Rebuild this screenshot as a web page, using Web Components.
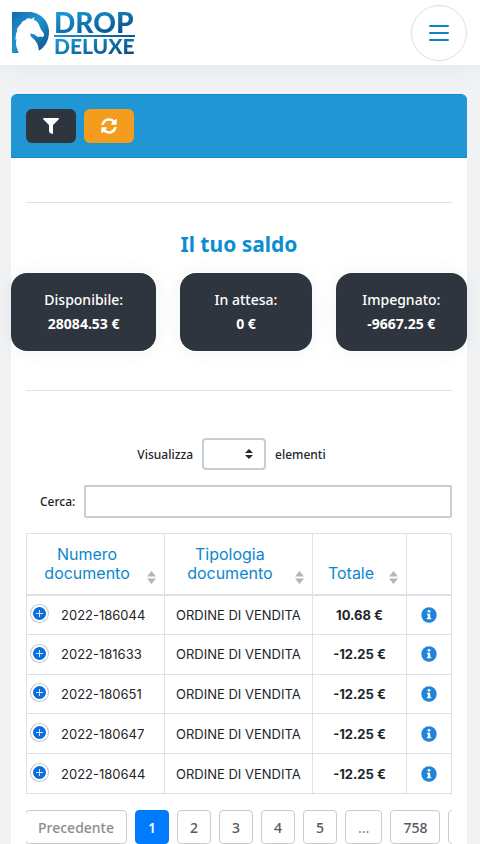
<!DOCTYPE html>
<html lang="it">
<head>
<meta charset="utf-8">
<meta name="viewport" content="width=device-width, initial-scale=1">
<title>Drop Deluxe – Il tuo saldo</title>
<style>
  html { background: #f0f2f4; }
  body { margin: 0; min-height: 100vh; overflow-x: hidden; font-family: "Noto Sans", "Open Sans", sans-serif; font-size: 14px; color: #212529; }
</style>
</head>
<body>
<dd-header></dd-header>
<dd-panel>
  <dd-toolbar slot="toolbar"></dd-toolbar>
  <dd-balances>
    <dd-balance label="Disponibile:">28084.53 €</dd-balance>
    <dd-balance label="In attesa:">0 €</dd-balance>
    <dd-balance label="Impegnato:">-9667.25 €</dd-balance>
  </dd-balances>
  <dd-filters></dd-filters>
  <dd-documents></dd-documents>
  <dd-pager></dd-pager>
</dd-panel>

<script>
const define = (name, markup, setup) => customElements.define(name, class extends HTMLElement {
  constructor() {
    super();
    this.attachShadow({ mode: "open" }).innerHTML =
      "<style>*{box-sizing:border-box}button,input,select{font:inherit;color:inherit;margin:0}button{cursor:pointer}</style>" + markup;
  }
  connectedCallback() { if (setup) setup(this, this.shadowRoot); }
});

define("dd-logo", `
  <style>
    :host { display: block; }
    a { display: flex; align-items: center; gap: 4px; text-decoration: none; }
    svg { display: block; }
    .words { display: flex; flex-direction: column; font-family: Lato, sans-serif; }
    b, i { font-style: normal; font-weight: 900; color: transparent; -webkit-background-clip: text; background-clip: text; background-image: linear-gradient(165deg, #1ba0dc, #07467f); }
    b { font-size: 28px; line-height: 23px; }
    i { font-size: 21px; line-height: 18px; }
    hr { width: 100%; height: 2px; margin: 1px 0 0; border: 0; background: linear-gradient(90deg, #1c93cf, #0a5593); }
  </style>
  <a href="#" aria-label="Drop Deluxe">
    <svg width="39" height="42" viewBox="0 0 39 42">
      <defs><linearGradient id="g" x1="0" y1="0" x2="1" y2="1"><stop offset="0" stop-color="#116aad"/><stop offset=".45" stop-color="#2196d4"/><stop offset="1" stop-color="#084b86"/></linearGradient></defs>
      <path fill="url(#g)" d="M1 0H18C29 0 38 9 38 20C38 29 33 37 25 40L8 41H1Z"/>
      <path fill="#fff" d="M23.500 5 23 8C26 9 27.500 11 28.500 14L30 17.500 32.500 21C33.500 23 33 25 31 25L29 24.500 28 25C26 25 25 23.500 23.500 22.500C22 22 21 22 19.500 21.500C19 23.500 20 25 22 26.500C26 30 28 34 28 42H8C7.500 39 4.500 35 5 30L5.500 27 4.500 28C4.500 24 5 21 6.500 18L5.500 18C7 15 8.500 13 10.500 11.500L10.500 10.500C12 9 13.500 8 15 8L15 7C17 6 19 6 20.500 7Z"/>
    </svg>
    <span class="words"><b>DROP</b><hr><i>DELUXE</i></span>
  </a>`);

define("dd-header", `
  <style>
    :host { display: flex; align-items: center; justify-content: space-between; height: 65px; padding: 0 13px 0 11px; background: #fff; box-shadow: 0 0 30px rgba(40,50,70,.06); box-sizing: border-box; }
    button { display: grid; place-items: center; width: 56px; height: 56px; padding: 0; border: 1px solid #dcdee0; border-radius: 50%; background: #fff; }
  </style>
  <dd-logo></dd-logo>
  <button type="button" aria-label="Menu"><svg width="20" height="16" viewBox="0 0 20 16" stroke="#0b84cb" stroke-width="2" stroke-linecap="round"><path d="M1 1H19M1 8H19M1 15H19"/></svg></button>`);

define("dd-panel", `
  <style>
    :host { display: block; margin: 29px 13px 0 11px; background: #fff; border-radius: 6px 6px 0 0; }
    main { padding: 0 15px; }
  </style>
  <slot name="toolbar"></slot>
  <main><slot></slot></main>`);

define("dd-toolbar", `
  <style>
    :host { display: flex; gap: 8px; padding: 14px 15px; background: #2196d5; border: 1px solid #128acb; border-width: 1px 0; border-radius: 6px 6px 0 0; }
    button { display: grid; place-items: center; width: 50px; height: 34px; padding: 0; border: 0; border-radius: 6px; color: #fff; background: #2f353e; }
    button.warn { background: #f39c1d; }
    svg { fill: currentColor; }
  </style>
  <button type="button" aria-label="Filtra"><svg width="16" height="16" viewBox="0 0 512 512"><path d="M488 0H24C2.700 0-8 25.900 7 41L192 226V432C192 440 196 447 202 452L282 508C298 519 320 508 320 488V226L505 41C520 26 509.300 0 488 0Z"/></svg></button>
  <button type="button" class="warn" aria-label="Aggiorna"><svg width="16" height="16" viewBox="0 0 512 512"><path d="M370.700 133.300C339.500 104 298.900 88 255.800 88c-77.500 0-144.300 53.200-162.800 126.900-1.300 5.400-6.100 9.100-11.700 9.100H24.100c-7.500 0-13.200-6.800-11.800-14.200C33.900 94.900 134.800 8 256 8c66.400 0 126.800 26.100 171.300 68.700L463 41C478.100 25.900 504 36.600 504 57.900V192c0 13.300-10.700 24-24 24H345.900c-21.400 0-32.100-25.900-17-41zM32 296h134.100c21.400 0 32.100 25.900 17 41l-41.800 41.800c31.300 29.300 71.800 45.300 114.900 45.200 77.500-.1 144.300-53.200 162.800-126.900 1.300-5.400 6.100-9.100 11.700-9.100h57.300c7.500 0 13.200 6.800 11.800 14.200C478.100 417.100 377.200 504 256 504c-66.400 0-126.800-26.100-171.300-68.700L49 471c-15.100 15.100-41 4.400-41-16.900V320c0-13.300 10.700-24 24-24z"/></svg></button>`);

define("dd-balances", `
  <style>
    :host { display: block; padding-top: 44px; }
    hr { height: 1px; margin: 0; border: 0; background: #dfe1e3; }
    section { padding: 26px 0 39px; }
    h2 { margin: 0; font-size: 21px; line-height: 30px; font-weight: 700; text-align: center; color: #0c8dd2; }
    .cards { display: flex; justify-content: space-between; gap: 24px; margin: 14px -15px 0; }
  </style>
  <hr><section><h2>Il tuo saldo</h2><div class="cards"><slot></slot></div></section><hr>`);

define("dd-balance", `
  <style>
    :host { flex: 1 1 131px; display: block; padding: 15px 12px; border-radius: 16px; background: #2f353e; color: #fff; text-align: center; font-weight: 500; line-height: 24px; box-shadow: 0 0 20px rgba(40,50,70,.06); box-sizing: border-box; white-space: nowrap; }
    :host(:first-child) { flex-basis: 145px; }
    span, b { display: block; }
    b { font-weight: 700; }
  </style>
  <span></span><b><slot></slot></b>`, (el, root) => { root.querySelector("span").textContent = el.getAttribute("label"); });

define("dd-filters", `
  <style>
    :host { display: flex; flex-direction: column; gap: 15px; padding: 47px 0 15px; font-size: 12px; font-weight: 500; }
    .len { display: flex; align-items: center; justify-content: center; gap: 9px; margin-right: 15px; }
    .pick { display: grid; align-items: center; }
    select, input { appearance: none; border: 2px solid #c6cdd5; background: #fff; outline: 0; }
    select { grid-area: 1/1; width: 64px; height: 32px; border-radius: 4px; padding: 0 8px; }
    .pick svg { grid-area: 1/1; justify-self: end; margin-right: 13px; pointer-events: none; }
    .find { display: flex; align-items: center; gap: 9px; padding-left: 14px; }
    input { flex: 1; min-width: 0; height: 33px; padding: 0 8px; border-radius: 2px; }
  </style>
  <div class="len"><label for="n">Visualizza</label>
    <span class="pick"><select id="n"><option></option></select><svg width="8" height="10" viewBox="0 0 8 10" fill="#20262d"><path d="M4 0 8 4H0ZM4 10 8 6H0Z"/></svg></span>
    <span>elementi</span></div>
  <div class="find"><label for="q">Cerca:</label><input id="q" type="search"></div>`);

define("dd-documents", `
  <style>
    :host { display: block; font-family: Inter, sans-serif; }
    table { width: 100%; height: 261px; border-collapse: collapse; table-layout: fixed; }
    th, td { border: 1px solid #dee2e6; padding: 0; text-align: center; }
    col:nth-child(1) { width: 32.500%; } col:nth-child(2) { width: 34.700%; } col:nth-child(3) { width: 22.300%; }
    th { height: 61px; padding: 0 8px 11px; vertical-align: bottom; border-bottom-width: 2px; font-size: 16px; line-height: 19px; font-weight: 400; color: #0b87cc; }
    .head { display: flex; align-items: flex-end; justify-content: flex-end; gap: 8px; }
    .head span { flex: 1; }
    .head svg { margin-bottom: -1px; }
    td { height: 39px; font-size: 13px; color: #212529; white-space: nowrap; }
    .num { display: flex; align-items: center; gap: 13px; padding-left: 4px; }
    button { display: grid; place-items: center; padding: 0; border: 0; background: none; border-radius: 50%; }
    .plus { width: 17px; height: 17px; border: 2px solid #fff; background: #0b6edb; box-shadow: 0 0 0 1px #c4c7ca; margin-bottom: 2px; }
    .info { margin: 0 auto; }
  </style>
  <table>
    <colgroup><col><col><col><col></colgroup>
    <thead><tr></tr></thead><tbody></tbody>
  </table>`, (el, root) => {
  const sort = '<svg width="9" height="13" viewBox="0 0 9 13" fill="#b3b5b7"><path d="M4.500 0 9 5.500H0ZM4.500 13 9 7.500H0Z"/></svg>';
  root.querySelector("thead tr").innerHTML =
    ["Numero documento", "Tipologia documento", "Totale"].map(t => `<th scope="col"><div class="head"><span>${t}</span>${sort}</div></th>`).join("") + "<th></th>";
  root.querySelector("tbody").innerHTML =
    [["2022-186044", "10.68"], ["2022-181633", "-12.25"], ["2022-180651", "-12.25"], ["2022-180647", "-12.25"], ["2022-180644", "-12.25"]].map(([n, v]) => `<tr>
      <td><div class="num"><button class="plus" type="button" aria-label="Espandi ${n}"><svg width="7" height="7" viewBox="0 0 7 7" stroke="#cfe4ff" stroke-width="1"><path d="M3.500 0V7M0 3.500H7"/></svg></button><span>${n}</span></div></td>
      <td>ORDINE DI VENDITA</td><td><b>${v} €</b></td>
      <td><button class="info" type="button" aria-label="Dettagli ${n}"><svg width="16" height="16" viewBox="0 0 16 16"><circle cx="8" cy="8" r="7.700" fill="#1f84dc"/><circle cx="8" cy="4.300" r="1.400" fill="#fff"/><path fill="#fff" d="M6 6.700H9.200V10.800H10.200V12.300H5.900V10.800H6.900V8.200H6Z"/></svg></button></td></tr>`).join("");
});

define("dd-pager", `
  <style>
    :host { display: block; padding-top: 16px; }
    nav { display: flex; gap: 8px; overflow: hidden; }
    button { flex: none; height: 34px; padding: 0 12px; border: 1px solid #c9cbcd; border-radius: 4px; background: #fff; color: #555a5f; font-weight: 500; }
    button:disabled { color: #8b8e91; }
    button.prev { margin-left: -1px; }
    button[aria-current] { background: #007bff; border-color: #007bff; color: #fff; font-weight: 600; }
  </style>
  <nav aria-label="Pagine">
    <button type="button" class="prev" disabled>Precedente</button><button type="button" aria-current="page">1</button><button type="button">2</button><button type="button">3</button><button type="button">4</button><button type="button">5</button><button type="button" disabled>…</button><button type="button">758</button><button type="button" aria-label="Successivo"></button>
  </nav>`);
</script>
</body>
</html>
